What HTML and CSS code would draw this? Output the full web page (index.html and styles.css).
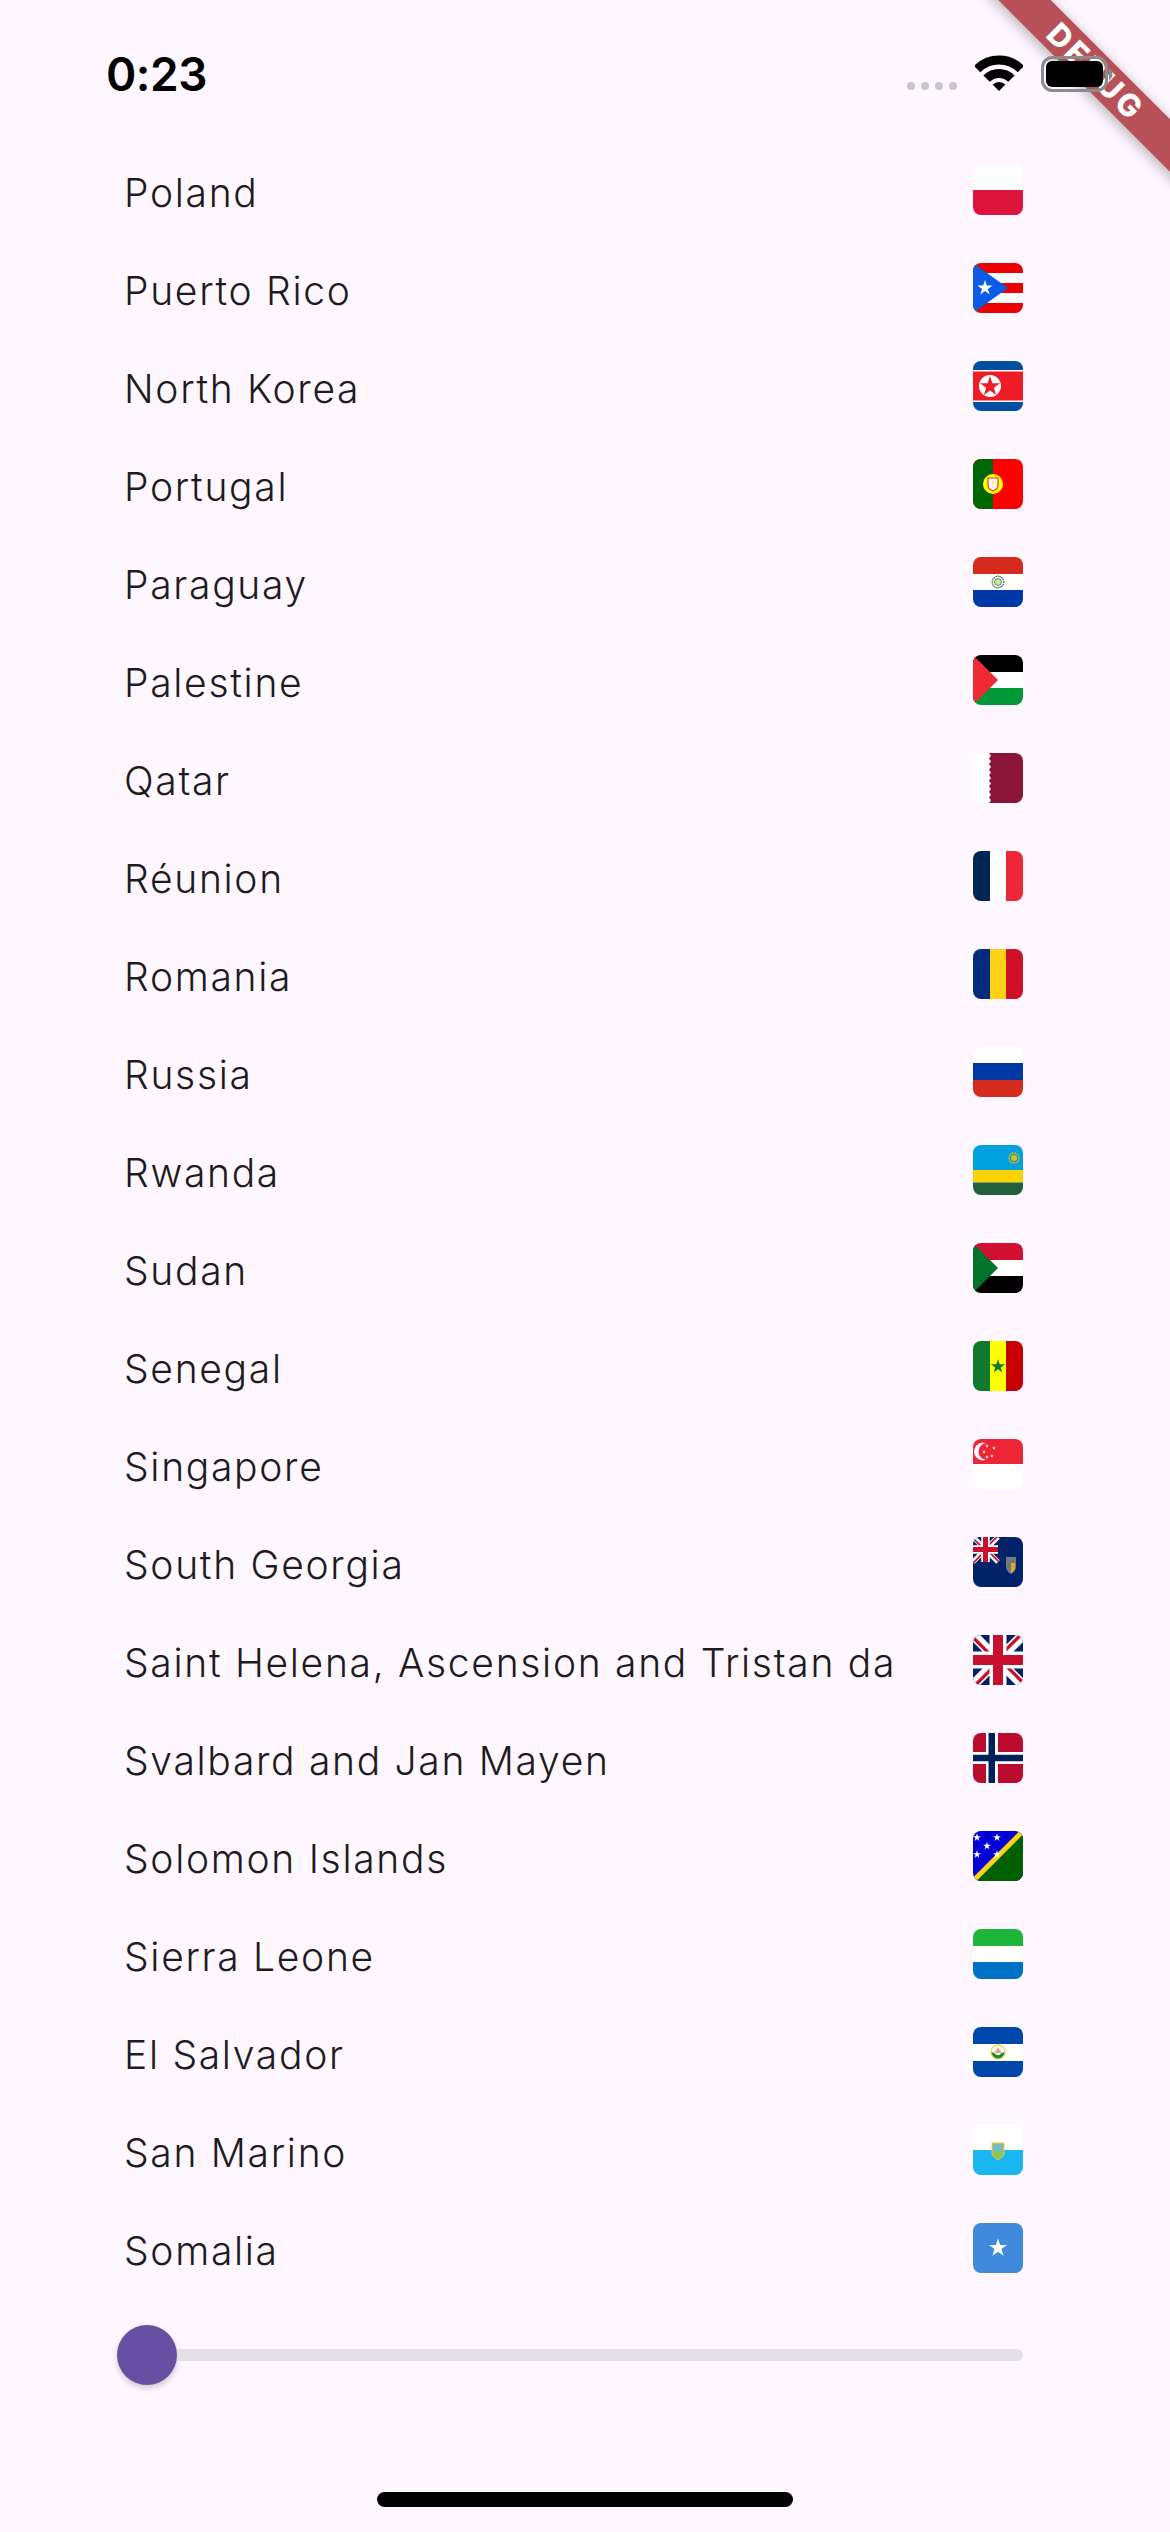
FILE: index.html
```html
<!DOCTYPE html>
<html lang="en">
<head>
<meta charset="utf-8">
<title>Countries</title>
<link rel="stylesheet" href="styles.css">
</head>
<body>
<div class="screen">
  <header class="status">
    <span class="time">0:23</span>
    <div class="status-icons">
      <div class="dots"><i></i><i></i><i></i><i></i></div>
      <svg class="wifi" viewBox="0 0 48 36"><path d="M2.1 14.1A31 31 0 0 1 45.9 14.1M11.6 23.6A17.5 17.5 0 0 1 36.4 23.6" fill="none" stroke="#000" stroke-width="9"/><path d="M24 36 17.6 29.6A9 9 0 0 1 30.4 29.6Z"/></svg>
      <svg class="battery" viewBox="0 0 72 36"><rect x="1.5" y="1.5" width="64" height="33" rx="10" fill="none" stroke="#8b8a8e" stroke-width="3"/><rect x="5" y="5" width="57" height="26" rx="6"/><path d="M68 12c2.500 1 3.500 3.500 3.500 6s-1 5-3.500 6Z" fill="#8b8a8e"/></svg>
    </div>
  </header>

  <ul class="list">
    <li class="row"><span class="name">Poland</span>
      <svg class="flag" viewBox="0 0 50 50"><rect width="50" height="25" fill="#fff"/><rect y="25" width="50" height="25" fill="#dc143c"/></svg></li>
    <li class="row"><span class="name">Puerto Rico</span>
      <svg class="flag" viewBox="0 0 50 50"><defs><path id="star" d="M0-1 .225-.309.951-.309.363.118.588.809 0 .382-.588.809-.363.118-.951-.309-.225-.309Z"/></defs><rect width="50" height="50" fill="#ed0000"/><path d="M0 10H50V20H0ZM0 30H50V40H0Z" fill="#fff"/><path d="M0 0 35 25 0 50Z" fill="#0a5be8"/><use href="#star" transform="translate(12 25) scale(8)" fill="#fff"/></svg></li>
    <li class="row"><span class="name">North Korea</span>
      <svg class="flag" viewBox="0 0 50 50"><rect width="50" height="50" fill="#024fa2"/><rect y="9" width="50" height="32" fill="#fff"/><rect y="10.500" width="50" height="29" fill="#ed1c27"/><circle cx="17" cy="25" r="11" fill="#fff"/><use href="#star" transform="translate(17 25.500) scale(10.500)" fill="#ed1c27"/></svg></li>
    <li class="row"><span class="name">Portugal</span>
      <svg class="flag" viewBox="0 0 50 50"><rect width="50" height="50" fill="#f00"/><rect width="20" height="50" fill="#060"/><circle cx="20" cy="25" r="10" fill="#ff0"/><path d="M15 19H25V26.500C25 29 22.500 31 20 32 17.500 31 15 29 15 26.500Z" fill="#fff" stroke="#e33" stroke-width="1.200"/><path d="M17.500 24H22.500M20 21V29" stroke="#fbe38a" stroke-width="1.200"/></svg></li>
    <li class="row"><span class="name">Paraguay</span>
      <svg class="flag" viewBox="0 0 50 50"><rect width="50" height="17" fill="#d52b1e"/><rect y="17" width="50" height="16" fill="#fff"/><rect y="33" width="50" height="17" fill="#0038a8"/><circle cx="25" cy="25" r="5.800" fill="#fff" stroke="#666" stroke-width="1.300" stroke-dasharray="1.500 .5"/><circle cx="25" cy="25" r="3.400" fill="#cfe8a8" stroke="#3a9a4a" stroke-width="1"/></svg></li>
    <li class="row"><span class="name">Palestine</span>
      <svg class="flag" viewBox="0 0 50 50"><rect width="50" height="17" fill="#000"/><rect y="17" width="50" height="16" fill="#fff"/><rect y="33" width="50" height="17" fill="#009736"/><path d="M0 0 25 25 0 50Z" fill="#ee2a35"/></svg></li>
    <li class="row"><span class="name">Qatar</span>
      <svg class="flag" viewBox="0 0 50 50"><rect width="50" height="50" fill="#fff"/><path d="M16 0H50V50H16L18 47.200 16 44.400 18 41.700 16 38.900 18 36.100 16 33.300 18 30.600 16 27.800 18 25 16 22.200 18 19.400 16 16.700 18 13.900 16 11.100 18 8.300 16 5.600 18 2.800Z" fill="#8a1538"/></svg></li>
    <li class="row"><span class="name">Réunion</span>
      <svg class="flag" viewBox="0 0 50 50"><rect width="17" height="50" fill="#002654"/><rect x="17" width="16" height="50" fill="#fff"/><rect x="33" width="17" height="50" fill="#ed2939"/></svg></li>
    <li class="row"><span class="name">Romania</span>
      <svg class="flag" viewBox="0 0 50 50"><rect width="17" height="50" fill="#002b7f"/><rect x="17" width="16" height="50" fill="#fcd116"/><rect x="33" width="17" height="50" fill="#ce1126"/></svg></li>
    <li class="row"><span class="name">Russia</span>
      <svg class="flag" viewBox="0 0 50 50"><rect width="50" height="16" fill="#fff"/><rect y="16" width="50" height="17" fill="#0039a6"/><rect y="33" width="50" height="17" fill="#d52b1e"/></svg></li>
    <li class="row"><span class="name">Rwanda</span>
      <svg class="flag" viewBox="0 0 50 50"><rect width="50" height="25" fill="#00a1de"/><rect y="25" width="50" height="12.500" fill="#fad201"/><rect y="37.500" width="50" height="12.500" fill="#20603d"/><circle cx="41" cy="13" r="3" fill="#e5be01"/><circle cx="41" cy="13" r="5" fill="none" stroke="#e5be01" stroke-width="1.600" stroke-dasharray="1 .6"/></svg></li>
    <li class="row"><span class="name">Sudan</span>
      <svg class="flag" viewBox="0 0 50 50"><rect width="50" height="17" fill="#d21034"/><rect y="17" width="50" height="16" fill="#fff"/><rect y="33" width="50" height="17" fill="#000"/><path d="M0 0 25 25 0 50Z" fill="#007229"/></svg></li>
    <li class="row"><span class="name">Senegal</span>
      <svg class="flag" viewBox="0 0 50 50"><rect width="17" height="50" fill="#0f7a2e"/><rect x="17" width="16" height="50" fill="#ff0"/><rect x="33" width="17" height="50" fill="#c60000"/><use href="#star" transform="translate(25 25.500) scale(7.500)" fill="#0f7a2e"/></svg></li>
    <li class="row"><span class="name">Singapore</span>
      <svg class="flag" viewBox="0 0 50 50"><rect width="50" height="50" fill="#fff"/><rect width="50" height="25" fill="#ee2536"/><circle cx="10" cy="12.500" r="9" fill="#fff"/><circle cx="14" cy="12.500" r="8.500" fill="#ee2536"/><g fill="#fff"><use href="#star" transform="translate(14 7) scale(2)"/><use href="#star" transform="translate(21 9) scale(2)"/><use href="#star" transform="translate(11 13) scale(2)"/><use href="#star" transform="translate(14 18) scale(2)"/><use href="#star" transform="translate(19 17) scale(2)"/></g></svg></li>
    <li class="row"><span class="name">South Georgia</span>
      <svg class="flag" viewBox="0 0 50 50"><defs><g id="union"><rect width="50" height="50" fill="#012169"/><path d="M0 0 50 50M50 0 0 50" stroke="#fff" stroke-width="10"/><path d="M-1.200 1.200 23 25.400M48.800-1.200 25 22.600M51.200 48.800 27 24.600M1.200 51.200 25 27.400" stroke="#c8102e" stroke-width="3.400"/><path d="M25 0V50M0 25H50" stroke="#fff" stroke-width="17"/><path d="M25 0V50M0 25H50" stroke="#c8102e" stroke-width="10"/></g></defs><rect width="50" height="50" fill="#012169"/><use href="#union" transform="scale(.5)"/><path d="M33 20H43V30C43 33 40 36 38 37 36 36 33 33 33 30Z" fill="#6f7a82"/><path d="M38 26H42V31C42 33 40 35 38 36Z" fill="#e0a81e"/></svg></li>
    <li class="row"><span class="name">Saint Helena, Ascension and Tristan da</span>
      <svg class="flag" viewBox="0 0 50 50"><use href="#union"/></svg></li>
    <li class="row"><span class="name">Svalbard and Jan Mayen</span>
      <svg class="flag" viewBox="0 0 50 50"><rect width="50" height="50" fill="#ba0c2f"/><path d="M13 0H25V50H13ZM0 19H50V31H0Z" fill="#fff"/><path d="M15.500 0H22V50H15.500ZM0 21.800H50V28.200H0Z" fill="#00205b"/></svg></li>
    <li class="row"><span class="name">Solomon Islands</span>
      <svg class="flag" viewBox="0 0 50 50"><rect width="50" height="50" fill="#0000d6"/><path d="M50 0V50H0Z" fill="#006000"/><path d="M0 50 50 0" stroke="#fcd116" stroke-width="5"/><g fill="#fff"><use href="#star" transform="translate(4 6.500) scale(4.200)"/><use href="#star" transform="translate(24 6.500) scale(4.200)"/><use href="#star" transform="translate(14 15) scale(4.200)"/><use href="#star" transform="translate(4 23.500) scale(4.200)"/><use href="#star" transform="translate(24 23.500) scale(4.200)"/></g></svg></li>
    <li class="row"><span class="name">Sierra Leone</span>
      <svg class="flag" viewBox="0 0 50 50"><rect width="50" height="17" fill="#1eb53a"/><rect y="17" width="50" height="16" fill="#fff"/><rect y="33" width="50" height="17" fill="#0072c6"/></svg></li>
    <li class="row"><span class="name">El Salvador</span>
      <svg class="flag" viewBox="0 0 50 50"><rect width="50" height="50" fill="#0047ab"/><rect y="17" width="50" height="17" fill="#fff"/><circle cx="25" cy="25" r="7" fill="#fff" stroke="#f4d84a" stroke-width="1.400"/><path d="M18.500 25A6.500 6.500 0 0 0 31.500 25L28 26.500A3.500 3.500 0 0 1 22 26.500Z" fill="#1a8a2a"/><path d="M25 20.500 29 26H21Z" fill="#e8a08a"/></svg></li>
    <li class="row"><span class="name">San Marino</span>
      <svg class="flag" viewBox="0 0 50 50"><rect width="50" height="25" fill="#fff"/><rect y="25" width="50" height="25" fill="#19b6ef"/><path d="M19 18H31V29C31 31 27.500 33 25 35 22.500 33 19 31 19 29Z" fill="#8fc35a" stroke="#e6c84a" stroke-width="1"/><path d="M20.500 20H29.500V25.500H20.500Z" fill="#6fb8e8"/></svg></li>
    <li class="row"><span class="name">Somalia</span>
      <svg class="flag" viewBox="0 0 50 50"><rect width="50" height="50" fill="#4189dd"/><use href="#star" transform="translate(25 25) scale(9.500)" fill="#fff"/></svg></li>
  </ul>

  <div class="slider">
    <div class="thumb"></div>
    <div class="track"></div>
  </div>

  <div class="home"></div>

  <div class="debug"><span>DEBUG</span></div>
</div>
</body>
</html>
```

FILE: styles.css
```css
* {
  box-sizing: border-box;
}

html,
body {
  margin: 0;
  padding: 0;
  overflow: hidden;
}

.screen {
  position: relative;
  width: 1170px;
  height: 2532px;
  overflow: hidden;
  background: #fef7ff;
  display: flex;
  flex-direction: column;
  font-family: Inter, "Liberation Sans", sans-serif;
}

.status {
  position: relative;
  z-index: 2;
  height: 141px;
  flex: none;
  display: flex;
  justify-content: space-between;
  padding: 46px 57px 0 106px;
}

.time {
  font-size: 46px;
  font-weight: 600;
  letter-spacing: -0.5px;
  line-height: 56px;
  color: #000;
}

.status-icons {
  display: flex;
  align-items: flex-start;
  padding-top: 9px;
}

.dots {
  display: flex;
  gap: 6px;
  margin-top: 27px;
  margin-right: 18px;
}

.dots i {
  width: 8px;
  height: 8px;
  border-radius: 50%;
  background: #c9c6cb;
}

.wifi {
  width: 48px;
  height: 36px;
  margin-right: 18px;
}

.battery {
  width: 72px;
  height: 36px;
  margin-top: 1px;
}

.list {
  list-style: none;
  margin: 0;
  padding: 0 147px 0 124px;
}

.row {
  height: 98px;
  display: flex;
  align-items: center;
  justify-content: space-between;
}

.name {
  font-size: 39px;
  font-weight: 300;
  letter-spacing: 1.7px;
  line-height: 48px;
  padding-top: 6px;
  color: #1d1b20;
  white-space: nowrap;
}

.flag {
  width: 50px;
  height: 50px;
  flex: none;
  border-radius: 8px;
  overflow: hidden;
  display: block;
}

.slider {
  display: flex;
  align-items: center;
  margin: 28px 147px 0 117px;
}

.thumb {
  width: 60px;
  height: 60px;
  flex: none;
  border-radius: 50%;
  background: #6750a4;
  box-shadow: 0 3px 6px rgba(0, 0, 0, 0.2);
}

.track {
  flex: 1;
  height: 12px;
  background: #e3dfe6;
  border-radius: 0 6px 6px 0;
}

.home {
  width: 416px;
  height: 15px;
  margin: 107px auto 0;
  border-radius: 8px;
  background: #000;
}

.debug {
  position: absolute;
  z-index: 1;
  left: 926px;
  top: 53px;
  width: 340px;
  height: 37px;
  transform: rotate(45deg);
  display: flex;
  align-items: center;
  justify-content: center;
  background: rgb(184, 80, 88);
  box-shadow: 0 3px 14px rgba(0, 0, 0, 0.3);
}

.debug span {
  font-size: 31px;
  font-weight: 800;
  line-height: 1;
  letter-spacing: 3px;
  color: #fff;
}
```
